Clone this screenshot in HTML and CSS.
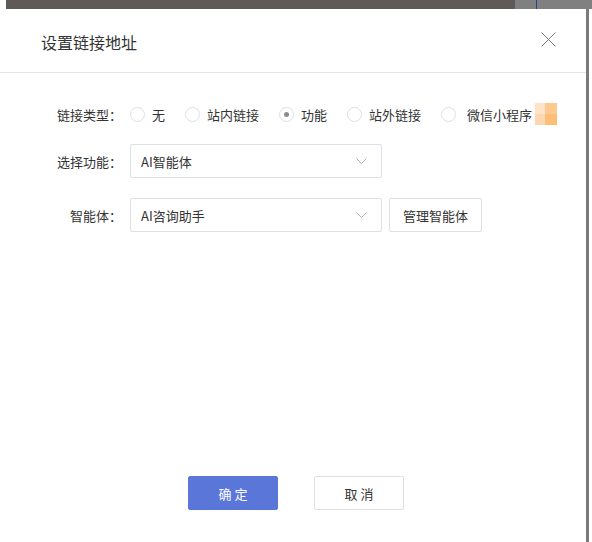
FILE: index.html
```html
<!DOCTYPE html>
<html lang="zh-CN">
<head>
    <meta charset="UTF-8">
    <meta name="viewport" content="width=device-width, initial-scale=1.0">
    <title>设置链接地址</title>
    <link rel="stylesheet" href="styles.css">
</head>
<body>
    <div class="backdrop-top"></div>
    <div class="stage">
        <div class="dialog">
            <div class="dialog-header">
                <span class="dialog-title">设置链接地址</span>
                <button class="dialog-close" aria-label="关闭">
                    <svg width="15" height="15" viewBox="0 0 15 15">
                        <path d="M0.5 0.5 L14.5 14.5 M14.5 0.5 L0.5 14.5" stroke="#7a7a7a" stroke-width="1" fill="none"/>
                    </svg>
                </button>
            </div>

            <div class="dialog-body">
                <!-- 链接类型 -->
                <div class="form-row row-type">
                    <label class="form-label">链接类型：</label>
                    <div class="radio-group">
                        <label class="radio"><span class="radio-dot"></span>无</label>
                        <label class="radio"><span class="radio-dot"></span>站内链接</label>
                        <label class="radio checked"><span class="radio-dot"></span>功能</label>
                        <label class="radio"><span class="radio-dot"></span>站外链接</label>
                        <label class="radio radio-wide"><span class="radio-dot"></span>微信小程序</label>
                        <span class="mini-logo">
                            <i class="q1"></i><i class="q2"></i><i class="q3"></i><i class="q4"></i>
                        </span>
                    </div>
                </div>

                <!-- 选择功能 -->
                <div class="form-row row-func">
                    <label class="form-label">选择功能：</label>
                    <div class="select">
                        <span>AI智能体</span>
                        <svg class="select-arrow" width="11" height="6" viewBox="0 0 11 6">
                            <path d="M0.5 0.5 L5.5 5.5 L10.5 0.5" stroke="#b4b4b4" fill="none"/>
                        </svg>
                    </div>
                </div>

                <!-- 智能体 -->
                <div class="form-row">
                    <label class="form-label">智能体：</label>
                    <div class="select">
                        <span>AI咨询助手</span>
                        <svg class="select-arrow" width="11" height="6" viewBox="0 0 11 6">
                            <path d="M0.5 0.5 L5.5 5.5 L10.5 0.5" stroke="#b4b4b4" fill="none"/>
                        </svg>
                    </div>
                    <button class="btn btn-plain btn-manage">管理智能体</button>
                </div>
            </div>

            <div class="dialog-footer">
                <button class="btn btn-primary">确 定</button>
                <button class="btn btn-plain btn-cancel">取 消</button>
            </div>
        </div>
        <div class="backdrop-side"></div>
    </div>
</body>
</html>
```

FILE: styles.css
```css
/* Reset */
* {
    margin: 0;
    padding: 0;
    box-sizing: border-box;
}

body {
    background: #fff;
    font-family: "Noto Sans CJK SC", "Noto Sans", sans-serif;
    font-size: 13px;
    color: #333;
    overflow: hidden;
}

/* Page behind the mask */
.backdrop-top {
    height: 9px;
    margin-left: 6px;
    background: linear-gradient(to right,
        #5f5a57 0, #5f5a57 509px,
        #808080 509px, #808080 530px,
        #2d3f8f 530px, #2d3f8f 531px,
        #808080 531px);
}

.stage {
    display: flex;
}

.backdrop-side {
    width: 3px;
    height: 533px;
    background: #7b7b7b;
}

/* Dialog */
.dialog {
    width: 586px;
    height: 533px;
    background: #fff;
    display: flex;
    flex-direction: column;
}

.dialog-header {
    height: 64px;
    padding: 2px 30px 0 41px;
    display: flex;
    justify-content: space-between;
    align-items: center;
    border-bottom: 1px solid #e6e6e6;
}

.dialog-title {
    font-size: 16px;
    color: #333;
}

.dialog-close {
    background: transparent;
    border: none;
    width: 15px;
    height: 15px;
    display: flex;
    margin-top: -4px;
    cursor: pointer;
}

.dialog-body {
    flex: 1;
    padding-top: 24px;
}

.form-row {
    display: flex;
    align-items: center;
    height: 34px;
    margin-bottom: 20px;
}

.row-type {
    margin-bottom: 13px;
}

.form-label {
    width: 122px;
    text-align: right;
    color: #333;
    margin-right: 8px;
}

/* Radios */
.radio-group {
    display: flex;
    align-items: center;
}

.radio {
    display: flex;
    align-items: center;
    margin-right: 20px;
    cursor: pointer;
}

.radio-dot {
    width: 15px;
    height: 15px;
    border: 1px solid #dcdfe6;
    border-radius: 50%;
    margin-right: 7px;
    display: flex;
    align-items: center;
    justify-content: center;
}

.radio.checked .radio-dot::after {
    content: "";
    width: 5px;
    height: 5px;
    border-radius: 50%;
    background: #8c8c8c;
}

.radio-wide {
    margin-right: 3px;
}

.radio-wide .radio-dot {
    margin-right: 11px;
}

.mini-logo {
    display: grid;
    grid-template-columns: 10px 12px;
    grid-template-rows: 11px 11px;
}

.mini-logo .q1 { background: #fee3c9; }
.mini-logo .q2 { background: #fdc98f; }
.mini-logo .q3 { background: #fdd7af; }
.mini-logo .q4 { background: #fdbf78; }

/* Select */
.select {
    width: 252px;
    height: 34px;
    border: 1px solid #dcdfe6;
    border-radius: 2px;
    padding: 0 10px 0 10px;
    display: flex;
    align-items: center;
    justify-content: space-between;
    color: #333;
}

.select-arrow {
    margin-right: 4px;
}

/* Buttons */
.btn {
    font-family: inherit;
    font-size: 13px;
    border-radius: 2px;
    cursor: pointer;
}

.btn-plain {
    background: #fff;
    border: 1px solid #dcdfe6;
    color: #333;
}

.btn-manage {
    height: 34px;
    width: 93px;
    margin-left: 7px;
}

.btn-primary {
    background: #5a76d9;
    border: 1px solid #5a76d9;
    color: #fff;
}

.dialog-footer {
    display: flex;
    justify-content: center;
    gap: 36px;
    padding: 0 0 32px 6px;
}

.dialog-footer .btn {
    width: 90px;
    height: 34px;
}
```
